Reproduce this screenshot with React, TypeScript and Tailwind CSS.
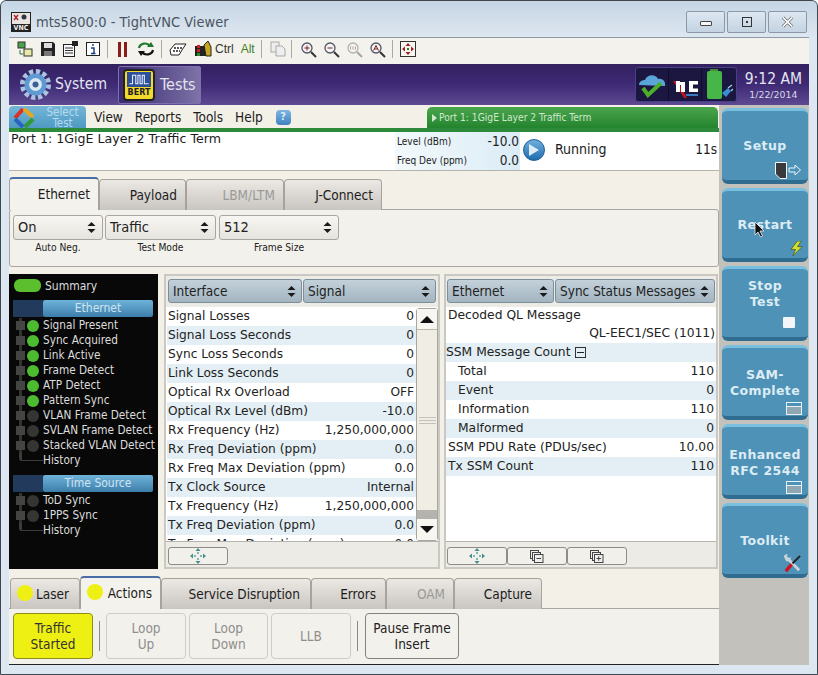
import React from "react";

const sans = "font-['DejaVu_Sans',sans-serif]";
const cond = "font-['DejaVu_Sans_Condensed','DejaVu_Sans',sans-serif]";

const ethernetLeds = [
  { label: "Signal Present", on: true },
  { label: "Sync Acquired", on: true },
  { label: "Link Active", on: true },
  { label: "Frame Detect", on: true },
  { label: "ATP Detect", on: true },
  { label: "Pattern Sync", on: true },
  { label: "VLAN Frame Detect", on: false },
  { label: "SVLAN Frame Detect", on: false },
  { label: "Stacked VLAN Detect", on: false },
];

const signalRows = [
  ["Signal Losses", "0"],
  ["Signal Loss Seconds", "0"],
  ["Sync Loss Seconds", "0"],
  ["Link Loss Seconds", "0"],
  ["Optical Rx Overload", "OFF"],
  ["Optical Rx Level (dBm)", "-10.0"],
  ["Rx Frequency (Hz)", "1,250,000,000"],
  ["Rx Freq Deviation (ppm)", "0.0"],
  ["Rx Freq Max Deviation (ppm)", "0.0"],
  ["Tx Clock Source", "Internal"],
  ["Tx Frequency (Hz)", "1,250,000,000"],
  ["Tx Freq Deviation (ppm)", "0.0"],
  ["Tx Freq Max Deviation (ppm)", "0.0"],
];

const ssmRows = [
  ["Total", "110"],
  ["Event", "0"],
  ["Information", "110"],
  ["Malformed", "0"],
];

function Spinner() {
  return (
    <svg width="9" height="13" viewBox="0 0 9 13" className="shrink-0">
      <path d="M4.5 1 L8.5 5 H0.5 Z M4.5 12 L0.5 8 H8.5 Z" fill="#1a1a1a" />
    </svg>
  );
}

function Moves() {
  return (
    <svg width="16" height="16" viewBox="0 0 16 16">
      <path d="M8 0 L10.5 3 H5.5 Z M8 16 L5.5 13 H10.5 Z M0 8 L3 5.5 V10.5 Z M16 8 L13 5.5 V10.5 Z" fill="#3e8f8c" />
      <rect x="7" y="4" width="2" height="2" fill="#7fb5b3" />
      <rect x="7" y="10" width="2" height="2" fill="#7fb5b3" />
      <rect x="4" y="7" width="2" height="2" fill="#7fb5b3" />
      <rect x="10" y="7" width="2" height="2" fill="#7fb5b3" />
    </svg>
  );
}

function Stack({ plus }: { plus?: boolean }) {
  return (
    <svg width="14" height="13" viewBox="0 0 14 13" fill="#eee" stroke="#444">
      <rect x="0.5" y="0.5" width="8" height="8" />
      <rect x="2.5" y="2.5" width="8" height="8" />
      <rect x="4.5" y="4.5" width="8.5" height="8" />
      <path d={plus ? "M6.5 8.5 H11 M8.7 6.3 V10.7" : "M6.5 8.5 H11"} />
    </svg>
  );
}

function Mag({ mark }: { mark: string }) {
  return (
    <svg width="17" height="17" viewBox="0 0 17 17" fill="none">
      <circle cx="7" cy="7" r="5" fill="#f4f4f4" stroke="#556" strokeWidth="1.3" />
      <path d="M11 11 L16 16" stroke="#333" strokeWidth="2" />
      <path d={mark} stroke="#7a1f1f" strokeWidth="1" />
    </svg>
  );
}

function Toolbar() {
  return (
    <div className="flex h-[27px] items-center border-t border-[#8f9aa6] bg-[#f4f2ec] pb-[4px] pl-[7px]">
      <svg width="16" height="16" viewBox="0 0 16 16" className="ml-px">
        <rect x="1" y="1" width="7" height="6" fill="#4aa34a" stroke="#333" />
        <rect x="7" y="8" width="8" height="7" fill="#e8e8a8" stroke="#333" />
        <path d="M3 9 V13 H6" stroke="#2a7a2a" fill="none" />
      </svg>
      <svg width="16" height="16" viewBox="0 0 16 16" className="ml-[7px]">
        <path d="M1 1 H13 L15 3 V15 H1 Z" fill="#222" />
        <rect x="4" y="2" width="8" height="5" fill="#ddd" />
        <rect x="4" y="10" width="8" height="5" fill="#777" />
      </svg>
      <svg width="16" height="16" viewBox="0 0 16 16" className="ml-[6px]">
        <rect x="1.5" y="3.5" width="11" height="12" fill="#f8f8f8" stroke="#222" />
        <path d="M3 7 H11 M3 9.5 H11 M3 12 H11" stroke="#333" />
        <rect x="10" y="0" width="6" height="5" fill="#222" />
      </svg>
      <svg width="16" height="16" viewBox="0 0 16 16" className="ml-[7px]">
        <rect x="1.5" y="1.5" width="13" height="13" fill="#fff" stroke="#222" />
        <path d="M8 3 V5 M6 7 H9 V12 M6 12.5 H10.5" stroke="#123a7a" strokeWidth="1.4" fill="none" />
      </svg>
      <div className="ml-[6px] mr-[10px] h-[18px] w-px bg-[#a9a9a5]" />
      <div className="flex gap-[3px]">
        <div className="h-[15px] w-[3px] bg-[#8a1c1c]" />
        <div className="h-[15px] w-[3px] bg-[#8a1c1c]" />
      </div>
      <svg width="18" height="16" viewBox="0 0 18 16" className="ml-[10px]" fill="none">
        <path d="M2 7 C3 2 10 1 13 5" stroke="#1d7a2c" strokeWidth="2.2" />
        <path d="M10 6 H17 L14 1 Z" fill="#1d7a2c" />
        <path d="M16 9 C15 14 8 15 5 11" stroke="#111" strokeWidth="2.2" />
        <path d="M1 10 H8 L4 15 Z" fill="#111" />
      </svg>
      <div className="ml-[6px] mr-[7px] h-[18px] w-px bg-[#a9a9a5]" />
      <svg width="18" height="14" viewBox="0 0 18 14">
        <path d="M1 8 L6 2 H17 L13 8 L10 13 H2 Z" fill="#fff" stroke="#222" />
        <path d="M5 6 H14 M4 9 H11" stroke="#222" strokeWidth="1.4" strokeDasharray="2 1" />
      </svg>
      <svg width="18" height="16" viewBox="0 0 18 16" className="ml-[7px]">
        <path d="M1 5 H12 V15 H1 Z" fill="#222" />
        <rect x="3" y="4" width="3" height="3" fill="#c22" />
        <rect x="3" y="8" width="3" height="3" fill="#c22" />
        <rect x="3" y="12" width="3" height="3" fill="#2a8a2a" />
        <path d="M10 4 L14 0 L17 6 V15 H12 Z" fill="#c6a520" stroke="#222" />
      </svg>
      <span className="ml-[3px] font-['Liberation_Sans',sans-serif] text-[12px] text-[#333]">Ctrl</span>
      <span className="ml-[7px] font-['Liberation_Sans',sans-serif] text-[12px] text-[#3f7f2a]">Alt</span>
      <div className="ml-[6px] mr-[8px] h-[18px] w-px bg-[#a9a9a5]" />
      <svg width="16" height="16" viewBox="0 0 16 16" fill="#eee" stroke="#a8a8a8">
        <rect x="1" y="1" width="8" height="10" />
        <path d="M6 5 H12 L15 8 V15 H6 Z" />
      </svg>
      <div className="ml-[5px] mr-[8px] h-[18px] w-px bg-[#a9a9a5]" />
      <Mag mark="M4.5 7 H9.5 M7 4.5 V9.5" />
      <div className="w-[6px]" />
      <Mag mark="M4.5 7 H9.5" />
      <div className="w-[6px]" />
      <div className="opacity-40">
        <Mag mark="M4.5 5.5 V8.5 M7 5.5 V8.5 M9.5 5.5 V8.5" />
      </div>
      <div className="w-[6px]" />
      <Mag mark="M4.5 9.5 L7 4.5 L9.5 9.5 M5.5 8 H8.5" />
      <div className="ml-[6px] mr-[7px] h-[18px] w-px bg-[#a9a9a5]" />
      <svg width="16" height="16" viewBox="0 0 16 16">
        <rect x="0.5" y="0.5" width="15" height="15" fill="#f6f6f0" stroke="#333" />
        <path d="M8 2 L10.5 5 H5.5 Z M8 14 L5.5 11 H10.5 Z M2 8 L5 5.5 V10.5 Z M14 8 L11 5.5 V10.5 Z" fill="#9c1f1f" />
        <path d="M7 7 H9 V9 H7 Z" fill="#2a7a2a" />
      </svg>
    </div>
  );
}

function StatusIcons() {
  return (
    <div className="flex h-[35px] w-[102px] items-center rounded-[3px] border border-[#49408a] bg-[#1c1740]">
      <div className="flex h-full w-[33px] items-center justify-center border-r border-[#100d2c]">
        <svg width="30" height="28" viewBox="0 0 30 28">
          <path d="M2 14 C2 10 6 9 8 9 C10 3 19 3 21 8 C25 7 29 10 28 15 Z" fill="#5aa6d8" />
          <path d="M6 17 L11 24 L24 12" stroke="#4caf2c" strokeWidth="4" fill="none" />
        </svg>
      </div>
      <div className="flex h-full w-[33px] items-center justify-center border-r border-[#100d2c]">
        <svg width="30" height="28" viewBox="0 0 30 28">
          <path d="M3 10 L14 27 L17 27 L8 10 Z" fill="#c3161c" />
          <rect x="6" y="10" width="4" height="11" fill="#fff" />
          <path d="M10 11 H15 V21 H11 V14 H10 Z" fill="#fff" />
          <path d="M28 10 H19 V21 H28 V17.5 H23 V13.5 H28 Z" fill="#fff" />
          <rect x="16" y="23" width="12" height="2" fill="#3a7cc0" />
        </svg>
      </div>
      <div className="flex h-full flex-1 items-center justify-center">
        <svg width="28" height="31" viewBox="0 0 28 31">
          <rect x="5" y="0" width="8" height="3" fill="#4a8a3a" />
          <rect x="2" y="2" width="15" height="28" rx="2" fill="#46b648" />
          <path d="M17 24 L23 19 L26 22 L21 28 Z" fill="#3b8ed0" />
          <path d="M23 19 L27 16 M26 22 L28 20" stroke="#9cc8e8" strokeWidth="1.4" />
        </svg>
      </div>
    </div>
  );
}

function MenuBar() {
  return (
    <div className="flex h-[23px] items-start bg-[#f3f0e8]">
      <div className="mt-px flex h-[24px] w-[77px] items-center rounded-t-[4px] bg-gradient-to-b from-[#74b6d8] to-[#4b96bf]">
        <svg width="24" height="24" viewBox="0 0 24 24" className="ml-[3px]" fill="none" strokeWidth="4">
          <path d="M3 12 L11 3" stroke="#d9302a" />
          <path d="M12 3 L21 11" stroke="#e6a81e" />
          <path d="M21 13 L13 21" stroke="#2f9a3a" />
          <path d="M11 21 L3 13" stroke="#2a62c0" />
        </svg>
        <div className="ml-[3px] flex-1 text-center text-[11.5px] leading-[11px] text-[#b5dcee]">
          Select
          <br />
          Test
        </div>
      </div>
      <div className="flex h-[24px] items-center pl-[8px] text-[13.5px] text-[#1c1c1c]">
        <span>View</span>
        <span className="ml-[12px]">Reports</span>
        <span className="ml-[12px]">Tools</span>
        <span className="ml-[12px]">Help</span>
        <div className="ml-[13px] flex h-[15px] w-[15px] items-center justify-center rounded-[4px] bg-gradient-to-b from-[#7fb4e0] to-[#3f82c0] text-[11px] font-bold text-[#d8ecfa]">
          ?
        </div>
      </div>
      <div className="ml-auto mr-px mt-[2px] flex h-[21px] w-[291px] items-center rounded-t-[5px] bg-gradient-to-b from-[#4aa64c] to-[#23842e] pl-[5px] text-[10.2px] text-[#cfe8cf]">
        <svg width="5" height="8" viewBox="0 0 5 8" className="mr-[2px]">
          <path d="M0 0 L5 4 L0 8 Z" fill="#cfe8cf" />
        </svg>
        Port 1: 1GigE Layer 2 Traffic Term
      </div>
    </div>
  );
}

function InfoStrip() {
  return (
    <>
      <div className="h-[4px] bg-[#2c8a3a]" />
      <div className="flex h-[39px] border-b border-[#b5b3ac] bg-white">
        <div className={`w-[386px] pl-[2px] text-[12.6px] leading-[14px] text-[#1c1c1c] ${sans}`}>Port 1: 1GigE Layer 2 Traffic Term</div>
        <div className="flex w-[125px] flex-col bg-gradient-to-r from-[#f2f9fc] to-[#dbecf6] pl-[2px] pr-px text-[#222]">
          <div className="flex h-[19px] items-center justify-between">
            <span className="text-[10px]">Level (dBm)</span>
            <span className="text-[13.5px]">-10.0</span>
          </div>
          <div className="flex h-[19px] items-center justify-between">
            <span className="text-[10px]">Freq Dev (ppm)</span>
            <span className="text-[13.5px]">0.0</span>
          </div>
        </div>
        <div className="ml-[3px] mt-[6px] flex h-[24px] flex-1 items-center pr-[2px] text-[14px] text-[#1c1c1c]">
          <div className="flex h-[22px] w-[22px] items-center justify-center rounded-full border border-[#1c5f9a] bg-gradient-to-b from-[#6fb0dc] to-[#1c6cae]">
            <svg width="10" height="12" viewBox="0 0 10 12">
              <path d="M0 0 L10 6 L0 12 Z" fill="#dcebf5" />
            </svg>
          </div>
          <span className="-mt-[2px] ml-[10px]">Running</span>
          <span className="-mt-[2px] ml-auto text-[13.5px]">11s</span>
        </div>
      </div>
    </>
  );
}

function Tab({ label, w, active, muted, led }: { label: string; w: string; active?: boolean; muted?: boolean; led?: boolean }) {
  return (
    <div
      className={`relative flex items-center justify-end whitespace-nowrap rounded-t-[4px] border border-b-0 border-[#a7a39c] text-[13.5px] ${w} ${
        active
          ? "z-10 h-[33px] border-t-2 border-t-[#4a6da5] bg-[#f4f2ec]"
          : "mt-[2px] h-[31px] bg-gradient-to-b from-[#ece9e5] to-[#c9c5c1]"
      } ${muted ? "text-[#9a9a98]" : "text-[#1c1c1c]"}`}
    >
      {led && <div className="absolute left-[6px] top-[6px] h-[16px] w-[16px] rounded-full bg-[#eef014]" />}
      {label}
    </div>
  );
}

function Select({ value, w, caption }: { value: string; w: string; caption: string }) {
  return (
    <div className={`flex flex-col items-center ${w}`}>
      <div className="flex h-[25px] w-full items-center justify-between rounded-[3px] border border-[#a9a69f] bg-gradient-to-b from-[#f7f6f2] to-[#e6e4de] pl-[4px] pr-[6px] text-[14.5px] text-[#222]">
        {value}
        <Spinner />
      </div>
      <div className="mt-[2px] text-[10.2px] leading-[12px] text-[#222]">{caption}</div>
    </div>
  );
}

function SettingsPanel() {
  return (
    <>
      <div className="mt-[6px] flex h-[33px]">
        <Tab label="Ethernet" w="w-[90px] pr-[8px]" active />
        <Tab label="Payload" w="w-[87px] pr-[8px]" />
        <Tab label="LBM/LTM" w="w-[98px] pr-[8px]" muted />
        <Tab label="J-Connect" w="w-[98px] pr-[8px]" />
      </div>
      <div className="-mt-px flex h-[58px] gap-[2px] rounded-[3px] border border-[#a9a69f] bg-[#f3f1eb] pl-[3px] pt-[5px]">
        <Select value="On" w="w-[90px]" caption="Auto Neg." />
        <Select value="Traffic" w="w-[111px]" caption="Test Mode" />
        <Select value="512" w="w-[120px] ml-px" caption="Frame Size" />
      </div>
    </>
  );
}

function SectionBar({ label }: { label: string }) {
  return (
    <div className="flex h-[17px]">
      <div className="ml-[4px] w-[30px] bg-[#223a5c]" />
      <div className="w-[110px] rounded-[2px] bg-gradient-to-b from-[#6fb3da] to-[#3c7eaa] text-center text-[12px] leading-[17px] text-[#cfe4f0]">
        {label}
      </div>
    </div>
  );
}

function LedRow({ label, on }: { label: string; on: boolean }) {
  return (
    <div className="flex h-[15px] items-center">
      <div className="relative ml-[7px] h-full w-[11px]">
        <div className="absolute left-[3px] top-0 h-full w-[3px] bg-[#34342f]" />
        <div className="absolute left-0 top-[3px] h-[9px] w-[9px] bg-[#444442]" />
      </div>
      <div className={`h-[12px] w-[12px] rounded-full ${on ? "bg-[#4dbb2f]" : "bg-[#353533]"}`} />
      <span className="ml-[4px] whitespace-nowrap">{label}</span>
    </div>
  );
}

function HistoryRow() {
  return (
    <div className="flex h-[15px] items-center">
      <div className="mb-[7px] ml-[10px] h-[8px] w-[24px] rounded-bl-[3px] border-b border-l-[3px] border-[#3c3c38]" />
      <span>History</span>
    </div>
  );
}

function SummaryPanel() {
  return (
    <div className="w-[149px] bg-[#080808] pt-[3px] text-[11.7px] text-[#dcdcdc]">
      <div className="flex h-[17px] items-center">
        <div className="ml-[5px] h-[13px] w-[27px] rounded-[6px] bg-[#5cc02e]" />
        <span className="ml-[4px] text-[12px]">Summary</span>
      </div>
      <div className="mt-[6px]">
        <SectionBar label="Ethernet" />
      </div>
      <div className="mt-[1px]">
        {ethernetLeds.map((l) => (
          <LedRow key={l.label} label={l.label} on={l.on} />
        ))}
        <HistoryRow />
      </div>
      <div className="mt-[7px]">
        <SectionBar label="Time Source" />
      </div>
      <div className="mt-[1px]">
        <LedRow label="ToD Sync" on={false} />
        <LedRow label="1PPS Sync" on={false} />
        <HistoryRow />
      </div>
    </div>
  );
}

function HeaderSelect({ label, w }: { label: string; w: string }) {
  return (
    <div className={`flex h-[24px] items-center justify-between rounded-[3px] border border-[#7c8e9a] bg-gradient-to-b from-[#c3d1da] to-[#a3b5c1] pl-[4px] pr-[5px] text-[13.5px] text-[#222] ${w}`}>
      <span className="whitespace-nowrap">{label}</span>
      <Spinner />
    </div>
  );
}

function FootButton({ children }: { children: React.ReactNode }) {
  return (
    <div className="flex h-[18px] w-[60px] items-center justify-center rounded-[3px] border border-[#8e8c86] bg-[#f2f0ea]">
      {children}
    </div>
  );
}

function SignalPanel() {
  return (
    <div className="ml-[6px] flex w-[276px] flex-col border-2 border-[#c9c8c3] bg-[#ecebe5]">
      <div className="flex gap-px pl-[2px] pt-[3px]">
        <HeaderSelect label="Interface" w="w-[134px]" />
        <HeaderSelect label="Signal" w="w-[133px]" />
      </div>
      <div className={`mt-[4px] flex h-[234px] overflow-hidden bg-white text-[12.2px] text-[#222] ${sans}`}>
        <div className="w-[250px] pl-px">
          {signalRows.map((r, i) => (
            <div key={r[0]} className={`flex h-[19px] items-center justify-between whitespace-nowrap pl-px pr-[2px] ${i % 2 === 1 ? "bg-[#e3eff4]" : "bg-white"}`}>
              <span>{r[0]}</span>
              <span>{r[1]}</span>
            </div>
          ))}
        </div>
        <div className="mt-px flex w-[22px] flex-col rounded-[3px] border border-[#a9a69f] bg-[#efede4]">
          <div className="flex h-[21px] items-center justify-center border-b border-[#b9b7b0] bg-[#f7f6f1]">
            <svg width="14" height="7" viewBox="0 0 14 7">
              <path d="M7 0 L14 7 H0 Z" fill="#111" />
            </svg>
          </div>
          <div className="flex flex-1 flex-col items-center justify-center gap-[2px]">
            <div className="h-px w-[17px] bg-[#c3c1b9]" />
            <div className="h-px w-[17px] bg-[#c3c1b9]" />
            <div className="h-px w-[17px] bg-[#c3c1b9]" />
          </div>
          <div className="h-[9px] bg-[#b5b3ad]" />
          <div className="flex h-[21px] items-center justify-center bg-[#f7f6f1]">
            <svg width="14" height="7" viewBox="0 0 14 7">
              <path d="M7 7 L14 0 H0 Z" fill="#111" />
            </svg>
          </div>
        </div>
      </div>
      <div className="flex flex-1 items-start border-t border-[#b5b3ac] pl-[2px] pt-[5px]">
        <FootButton>
          <Moves />
        </FootButton>
      </div>
    </div>
  );
}

function SyncPanel() {
  return (
    <div className="ml-[4px] flex w-[274px] flex-col border-2 border-[#c9c8c3] bg-[#ecebe5]">
      <div className="flex gap-px pl-px pt-[3px]">
        <HeaderSelect label="Ethernet" w="w-[107px]" />
        <HeaderSelect label="Sync Status Messages" w="w-[160px]" />
      </div>
      <div className={`mt-[4px] h-[234px] bg-white text-[12.3px] text-[#222] ${sans}`}>
        <div className="flex h-[17px] items-center pl-[2px]">Decoded QL Message</div>
        <div className="flex h-[19px] items-center justify-end pr-px">QL-EEC1/SEC (1011)</div>
        <div className="flex h-[19px] items-center bg-[#e3eff4] pl-0">
          SSM Message Count
          <div className="ml-[5px] flex h-[11px] w-[11px] items-center justify-center border border-[#333]">
            <div className="h-px w-[7px] bg-[#222]" />
          </div>
        </div>
        {ssmRows.map((r, i) => (
          <div key={r[0]} className={`flex h-[19px] items-center justify-between pl-[12px] pr-[2px] ${i % 2 === 1 ? "bg-[#e3eff4]" : ""}`}>
            <span>{r[0]}</span>
            <span>{r[1]}</span>
          </div>
        ))}
        <div className="flex h-[19px] items-center justify-between px-[2px]">
          <span>SSM PDU Rate (PDUs/sec)</span>
          <span>10.00</span>
        </div>
        <div className="flex h-[19px] items-center justify-between bg-[#e3eff4] px-[2px]">
          <span>Tx SSM Count</span>
          <span>110</span>
        </div>
      </div>
      <div className="flex flex-1 items-start border-t border-[#b5b3ac] pl-px pt-[5px]">
        <FootButton>
          <Moves />
        </FootButton>
        <FootButton>
          <Stack />
        </FootButton>
        <FootButton>
          <Stack plus />
        </FootButton>
      </div>
    </div>
  );
}

function ActionButton({ lines, w, muted, lit }: { lines: string[]; w: string; muted?: boolean; lit?: boolean }) {
  return (
    <div
      className={`flex h-[46px] flex-col items-center justify-center whitespace-nowrap rounded-[4px] border text-center text-[13.5px] leading-[16px] ${w} ${
        lit
          ? "border-[#8b8f1a] bg-[#eef013] text-[#333]"
          : muted
            ? "border-[#cfccc5] bg-[#f3f1ec] text-[#8f8f8d]"
            : "border-[#84827c] bg-[#f3f1ec] text-[#222]"
      }`}
    >
      {lines.map((l) => (
        <span key={l}>{l}</span>
      ))}
    </div>
  );
}

function ActionsPanel() {
  return (
    <>
      <div className="mt-[7px] flex h-[33px] pl-px">
        <Tab label="Laser" w="w-[70px] pr-[10px]" led />
        <Tab label="Actions" w="w-[81px] pr-[8px]" active led />
        <Tab label="Service Disruption" w="w-[150px] pr-[10px]" />
        <Tab label="Errors" w="w-[75px] pr-[9px]" />
        <Tab label="OAM" w="w-[68px] pr-[8px]" muted />
        <Tab label="Capture" w="w-[88px] pr-[9px]" />
      </div>
      <div className="-mt-px flex h-[57px] items-start border-b border-t border-b-[#222] border-t-[#a9a69f] bg-[#f3f1eb] pl-[4px] pt-[4px]">
        <ActionButton lines={["Traffic", "Started"]} w="w-[80px]" lit />
        <div className="mx-[6px] mt-[8px] h-[30px] w-px bg-[#8c8a84]" />
        <ActionButton lines={["Loop", "Up"]} w="w-[80px]" muted />
        <div className="w-[3px]" />
        <ActionButton lines={["Loop", "Down"]} w="w-[79px]" muted />
        <div className="w-[3px]" />
        <ActionButton lines={["LLB"]} w="w-[80px]" muted />
        <div className="mx-[6px] mt-[8px] h-[30px] w-px bg-[#8c8a84]" />
        <ActionButton lines={["Pause Frame", "Insert"]} w="w-[94px] ml-px" />
      </div>
    </>
  );
}

function SideButton({ lines, h, pt, children }: { lines: string[]; h: string; pt: string; children?: React.ReactNode }) {
  return (
    <div className={`relative flex w-[86px] flex-col items-center rounded-[6px] border-b-[4px] border-t-[3px] border-b-[#2f6c8f] border-t-[#79bfe0] bg-[#4f92b8] text-[12.5px] font-bold leading-[16px] tracking-[0.4px] text-[#dcecf3] ${sans} ${h} ${pt}`}>
      {lines.map((l) => (
        <span key={l}>{l}</span>
      ))}
      {children}
    </div>
  );
}

function WindowIcon() {
  return (
    <svg width="16" height="13" viewBox="0 0 16 13" className="absolute bottom-[1px] right-[6px]">
      <rect x="0.5" y="0.5" width="15" height="12" fill="#8fa7b2" stroke="#e8f2f6" />
      <rect x="1" y="1" width="14" height="3" fill="#4f92b8" />
      <path d="M0 4.5 H16" stroke="#e8f2f6" />
    </svg>
  );
}

function SideBar() {
  return (
    <div className="flex w-[90px] flex-col gap-[4px] bg-[#c2c1bc] pl-[3px] pt-[3px]">
      <SideButton lines={["Setup"]} h="h-[76px]" pt="pt-[27px]">
        <svg width="26" height="17" viewBox="0 0 26 17" className="absolute bottom-[1px] right-[7px]">
          <path d="M0.5 0.5 H11.5 V16.5 H5 L0.5 12 Z" fill="#3a3a3c" stroke="#eef6fa" />
          <path d="M14 6 H20 V3 L25.5 8 L20 13 V10 H14 Z" fill="#4f92b8" stroke="#eef6fa" />
        </svg>
      </SideButton>
      <SideButton lines={["Restart"]} h="h-[74px]" pt="pt-[26px]">
        <svg width="13" height="15" viewBox="0 0 14 16" className="absolute bottom-[2px] right-[5px]">
          <path d="M8 0 L1 9 H6 L3 16 L13 6 H8 L12 0 Z" fill="#d4e02c" stroke="#3c4a20" strokeWidth="0.7" />
        </svg>
      </SideButton>
      <SideButton lines={["Stop", "Test"]} h="h-[75px]" pt="pt-[9px]">
        <div className="absolute bottom-[9px] right-[13px] h-[11px] w-[12px] rounded-[1px] bg-[#f2f6f8]" />
      </SideButton>
      <SideButton lines={["SAM-", "Complete"]} h="h-[75px]" pt="pt-[19px]">
        <WindowIcon />
      </SideButton>
      <SideButton lines={["Enhanced", "RFC 2544"]} h="h-[75px]" pt="pt-[20px]">
        <WindowIcon />
      </SideButton>
      <SideButton lines={["Toolkit"]} h="h-[75px]" pt="pt-[27px]">
        <svg width="19" height="19" viewBox="0 0 20 20" className="absolute bottom-[1px] right-[6px]">
          <path d="M4 4 L17 17" stroke="#c9d3d9" strokeWidth="3" />
          <path d="M1 3 C1 1 3 0 5 0 L4 3 L6 5 L8 3 C9 6 6 9 3 7 Z" fill="#c9d3d9" />
          <path d="M18 2 L10 10" stroke="#222" strokeWidth="2" />
          <path d="M9 11 L3 18" stroke="#c8161c" strokeWidth="3.6" />
        </svg>
      </SideButton>
    </div>
  );
}

function Gear() {
  return (
    <svg width="33" height="33" viewBox="0 0 33 33" className="ml-[10px]">
      <circle cx="16.5" cy="16.5" r="13" fill="none" stroke="#a8c4de" strokeWidth="5" strokeDasharray="4.2 2.6" />
      <circle cx="16.5" cy="16.5" r="11" fill="#5f9ad2" />
      <circle cx="16.5" cy="16.5" r="6.5" fill="#dbe8f2" />
      <circle cx="16.5" cy="16.5" r="3" fill="#3b5f95" />
    </svg>
  );
}

export default function App() {
  return (
    <div className={`relative flex h-[675px] w-[818px] flex-col overflow-hidden rounded-t-[6px] bg-[#dce7f2] ${cond}`}>
      <div className="flex h-[37px] items-start bg-gradient-to-b from-[#c5d5e5] to-[#dde7f0] pl-[11px] pt-[12px]">
        <svg width="20" height="20" viewBox="0 0 20 20" className="shrink-0">
          <rect x="0.5" y="0.5" width="19" height="19" fill="#e8e4e0" stroke="#222" />
          <rect x="1" y="12" width="18" height="7" fill="#222" />
          <path d="M3 3 L7 8 M7 3 L3 8" stroke="#b8202c" strokeWidth="1.4" />
          <circle cx="13" cy="5" r="2.5" fill="#334" />
          <text x="10" y="18" textAnchor="middle" fontSize="7" fontWeight="bold" fill="#f2f2f2">VNC</text>
        </svg>
        <span className="ml-[5px] text-[14.5px] leading-[20px] text-[#4c545e]">mts5800:0 - TightVNC Viewer</span>
        <div className="ml-auto mr-[11px] -mt-px flex gap-[2px]">
          {["min", "max", "close"].map((k) => (
            <div key={k} className="flex h-[22px] w-[39px] items-center justify-center rounded-[2px] border border-[#8a98a8] bg-gradient-to-b from-[#dce7f1] to-[#c4d3e2]">
              {k === "min" && <div className="mt-[3px] h-[5px] w-[12px] rounded-[1px] border border-[#444] bg-[#f6f6f6]" />}
              {k === "max" && (
                <div className="flex h-[10px] w-[10px] items-center justify-center border border-[#333]">
                  <div className="h-[2px] w-[2px] bg-[#333]" />
                </div>
              )}
              {k === "close" && (
                <svg width="13" height="12" viewBox="0 0 12 12">
                  <path d="M1.5 1.5 L10.5 10.5 M10.5 1.5 L1.5 10.5" stroke="#444" strokeWidth="3" />
                  <path d="M1.5 1.5 L10.5 10.5 M10.5 1.5 L1.5 10.5" stroke="#f6f6f6" strokeWidth="1.8" />
                </svg>
              )}
            </div>
          ))}
        </div>
      </div>

      <div className="mx-[9px] flex h-[628px] flex-col">
        <Toolbar />
        <div className="flex h-[41px] items-center bg-gradient-to-b from-[#33215f] via-[#3f2a75] to-[#5e4a92] text-[#e4e4ee]">
          <Gear />
          <span className="ml-[3px] mt-px text-[15.5px]">System</span>
          <div className="ml-[11px] flex h-[38px] w-[83px] items-center rounded-[2px] border border-[#7f6fb0] bg-gradient-to-r from-[#3b2a70] to-[#7e72a8]">
            <div className="ml-[4px] flex h-[32px] w-[32px] flex-col items-center rounded-[4px] border-2 border-[#222] bg-[#f2d92c]">
              <svg width="24" height="15" viewBox="0 0 22 14" className="mt-px bg-[#2b4f9a]">
                <path d="M2 11 H5 V3 H8 V11 H10 V3 H12 V11 H14 V3 H16 V11 H20" fill="none" stroke="#eef" strokeWidth="1" />
              </svg>
              <span className={`text-[8px] font-bold leading-[11px] text-[#222] ${sans}`}>BERT</span>
            </div>
            <span className="ml-[5px] text-[16px]">Tests</span>
          </div>
          <div className="ml-auto mr-[7px] flex items-center">
            <StatusIcons />
            <div className="ml-[8px] flex flex-col items-center">
              <span className="text-[15.5px] leading-[20px]">9:12 AM</span>
              <span className={`text-[9.4px] leading-[11px] text-[#d8d8e6] ${sans}`}>1/22/2014</span>
            </div>
          </div>
        </div>

        <div className="flex flex-1">
          <div className="flex w-[710px] flex-col bg-[#f3f0e8]">
            <MenuBar />
            <InfoStrip />
            <SettingsPanel />
            <div className="mt-[7px] flex h-[295px]">
              <SummaryPanel />
              <SignalPanel />
              <SyncPanel />
            </div>
            <ActionsPanel />
          </div>
          <SideBar />
        </div>
      </div>
      <svg width="12" height="18" viewBox="0 0 12 18" className="absolute left-[754px] top-[221px]">
        <path d="M1 1 V14 L4 11 L6.5 16 L8.5 15 L6 10 H10 Z" fill="#111" stroke="#eee" strokeWidth="0.8" />
      </svg>
      <div className="pointer-events-none absolute inset-0 rounded-t-[6px] border border-[#3f464e]" />
    </div>
  );
}
